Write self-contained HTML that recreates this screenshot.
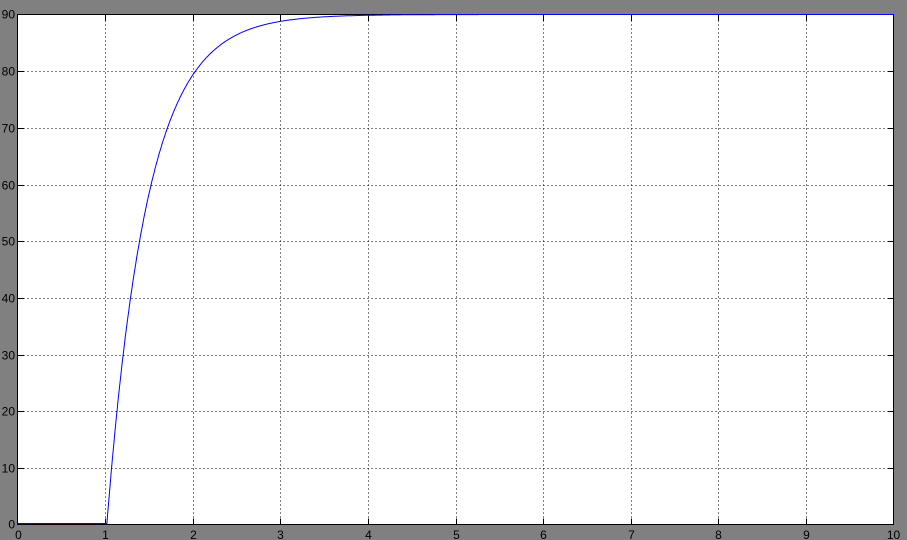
<!DOCTYPE html>
<html><head><meta charset="utf-8"><style>
html,body{margin:0;padding:0;background:#808080;width:907px;height:540px;overflow:hidden}
svg{display:block}
text{font-family:"Liberation Sans",sans-serif;font-size:12px;fill:#000}
</style></head><body>
<svg id="s" width="907" height="540" xmlns="http://www.w3.org/2000/svg">
<rect x="0" y="0" width="907" height="540" fill="#808080"/>
<rect x="17.5" y="14.5" width="876" height="510" fill="#fff" stroke="#000" stroke-width="1" shape-rendering="crispEdges"/>
<g id="grid" stroke="#000" stroke-width="1" stroke-dasharray="1 3" fill="none" shape-rendering="crispEdges"></g>
<g id="ticks" stroke="#000" stroke-width="1" shape-rendering="crispEdges"></g>
<g id="lab"></g>
<polyline id="c" fill="none" stroke="#0000ff" stroke-width="1"/>
</svg>
<script>
var L=17.5,R=893.5,T=14.5,B=524.5,ns="http://www.w3.org/2000/svg";
function X(t){return L+(R-L)*t/10}function Y(v){return B-(B-T)*v/90}
var g=document.getElementById('grid'),tk=document.getElementById('ticks'),lb=document.getElementById('lab');
function el(p,n,a,txt){var e=document.createElementNS(ns,n);for(var k in a)e.setAttribute(k,a[k]);if(txt!=null)e.textContent=txt;p.appendChild(e);}
for(var i=0;i<=10;i++){var x=Math.round(X(i))+0.5;if(i==10)x=R;if(i>0&&i<10){el(g,'line',{x1:x,y1:T+6,x2:x,y2:B-6});el(tk,'line',{x1:x,y1:B,x2:x,y2:B-6});el(tk,'line',{x1:x,y1:T,x2:x,y2:T+6});}
el(lb,'text',{x:x,y:539,'text-anchor':'middle'},i);}
for(var j=0;j<=9;j++){var v=j*10,y=Math.round(Y(v))+0.5;if(j==0)y=B;if(j==9)y=T;if(j>0&&j<9){el(g,'line',{x1:L+6,y1:y,x2:R-6,y2:y});el(tk,'line',{x1:L,y1:y,x2:L+6,y2:y});el(tk,'line',{x1:R,y1:y,x2:R-6,y2:y});}
el(lb,'text',{x:15,y:y+4,'text-anchor':'end'},v);}
var pts=[];pts.push(X(0)+','+(B-1));pts.push(X(1.02)+','+(B-1));
for(var t=1.02;t<=10;t+=0.01){var v=90*(1-Math.exp(-(t-1.02)/0.46));pts.push(X(t).toFixed(1)+','+Math.min(B-1,Y(v)).toFixed(1));}
document.getElementById('c').setAttribute('points',pts.join(' '));
</script>
</body></html>
